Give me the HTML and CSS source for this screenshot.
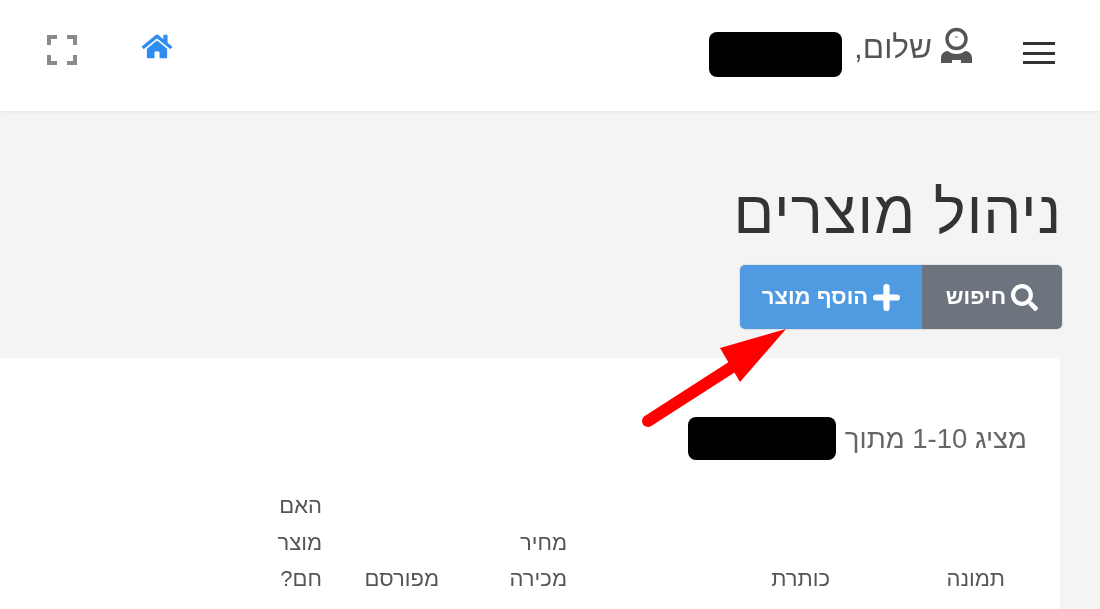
FILE: index.html
```html
<!DOCTYPE html>
<html lang="he" dir="rtl">
<head>
    <meta charset="UTF-8">
    <meta name="viewport" content="width=device-width, initial-scale=1.0">
    <title>ניהול מוצרים</title>
    <link rel="stylesheet" href="styles.css">
</head>
<body>

<header class="topbar">
    <button class="menuToggle" aria-label="תפריט">
        <span></span><span></span><span></span>
    </button>
    <div class="greeting">
        <svg class="userIcon" viewBox="0 0 33 36">
            <circle cx="16.500" cy="12" r="9.500" fill="none" stroke="#555" stroke-width="3.400"/>
            <path d="M15 10h3" stroke="#999" stroke-width="1.500"/>
            <path d="M1 36v-5c0-4 3-7 7-7 2 2 5 3 8.500 3s6.500-1 8.500-3c4 0 7 3 7 7v5h-11v-3h-9v3z" fill="#555"/>
        </svg>
        <span class="greetingText">שלום,</span>
        <span class="redacted redactedName"></span>
    </div>
    <div class="topbarTools">
        <svg class="homeIcon" viewBox="0 0 576 512">
            <path fill="#2f8cf0" d="M280.37 148.26L96 300.11V464a16 16 0 0 0 16 16l112.06-.29a16 16 0 0 0 15.92-16V368a16 16 0 0 1 16-16h64a16 16 0 0 1 16 16v95.64a16 16 0 0 0 16 16.05L464 480a16 16 0 0 0 16-16V300L295.67 148.26a12.19 12.19 0 0 0-15.3 0zM571.6 251.47L488 182.56V44.05a12 12 0 0 0-12-12h-56a12 12 0 0 0-12 12v72.61L318.47 43a48 48 0 0 0-61 0L4.34 251.47a12 12 0 0 0-1.6 16.9l25.5 31A12 12 0 0 0 45.15 301l235.22-193.74a12.19 12.19 0 0 1 15.3 0L530.9 301a12 12 0 0 0 16.9-1.6l25.5-31a12 12 0 0 0-1.7-16.93z"/>
        </svg>
        <svg class="expandIcon" viewBox="0 0 30 30">
            <path fill="none" stroke="#8a8a8a" stroke-width="4" d="M2 10V2h8M20 2h8v8M28 20v8h-8M10 28H2v-8"/>
        </svg>
    </div>
</header>

<main class="content">
    <h1 class="pageTitle">ניהול מוצרים</h1>

    <div class="actions">
        <button class="actionBtn searchBtn">
            <svg viewBox="0 0 512 512">
                <path fill="#fff" d="M505 442.7L405.3 343c-4.5-4.5-10.6-7-17-7H372c27.6-35.3 44-79.7 44-128C416 93.1 322.9 0 208 0S0 93.1 0 208s93.1 208 208 208c48.3 0 92.7-16.4 128-44v16.3c0 6.4 2.5 12.5 7 17l99.7 99.7c9.4 9.4 24.6 9.4 33.9 0l28.3-28.3c9.4-9.4 9.4-24.6.1-34zM208 336c-70.7 0-128-57.2-128-128 0-70.7 57.2-128 128-128 70.7 0 128 57.2 128 128 0 70.7-57.2 128-128 128z"/>
            </svg>
            חיפוש
        </button>
        <button class="actionBtn addBtn">
            <svg viewBox="0 0 26 26">
                <path stroke="#fff" stroke-width="6" stroke-linecap="round" d="M13 3v20M3 13h20"/>
            </svg>
            הוסף מוצר
        </button>
    </div>

    <section class="card">
        <div class="summary">
            <span>מציג 1-10 מתוך</span>
            <span class="redacted redactedTotal"></span>
        </div>
        <div class="tableHead">
            <div>תמונה</div>
            <div>כותרת</div>
            <div>מחיר<br>מכירה</div>
            <div>מפורסם</div>
            <div>האם<br>מוצר<br>חם?</div>
        </div>
    </section>
</main>

<!-- חץ שמצביע על כפתור ההוספה -->
<svg class="arrow" viewBox="0 0 1100 609">
    <path d="M648 421L732 367" stroke="#f00" stroke-width="12" stroke-linecap="round"/>
    <path d="M786 329L720 348L740 382z" fill="#f00"/>
</svg>

</body>
</html>
```

FILE: styles.css
```css
html, body {
    height: 100%;
}
body {
    margin: 0;
    overflow: hidden;
    background-color: #f4f4f4;
    color: #555;
    font-family: 'Liberation Sans', Arial, sans-serif;
    position: relative;
    filter: blur(0.6px); /* the reference is a soft, scaled-up capture */
}
.topbar {
    height: 111px;
    box-sizing: border-box;
    padding: 0 45px 0 47px;
    display: flex;
    align-items: flex-start;
    background-color: #fff;
    box-shadow: 0 1px 3px rgba(0, 0, 0, 0.06);
}
.menuToggle {
    width: 32px;
    height: 22px;
    margin-top: 42px;
    padding: 0;
    border: none;
    background: none;
    display: flex;
    flex-direction: column;
    justify-content: space-between;
}
.menuToggle span {
    display: block;
    height: 3px;
    background-color: #333;
}
.greeting {
    margin-right: 50px;
    display: flex;
    align-items: flex-start;
    font-size: 31.5px;
}
.userIcon {
    width: 33px;
    height: 36px;
    margin-top: 27px;
}
.greetingText {
    margin: 29px 8px 0 12px;
    line-height: 36px;
}
.redacted {
    display: block;
    background-color: #000;
    border-radius: 8px;
}
.redactedName {
    width: 133px;
    height: 45px;
    margin-top: 32px;
}
.topbarTools {
    margin-right: auto;
    display: flex;
    align-items: flex-start;
    gap: 64px;
}
.homeIcon {
    width: 32px;
    height: 27px;
    margin-top: 33px;
}
.expandIcon {
    width: 30px;
    height: 30px;
    margin-top: 35px;
}
.content {
    padding-right: 40px;
}
.pageTitle {
    margin: 62px -2px 0 0;
    font-size: 60px;
    font-weight: 400;
    letter-spacing: 1px;
    line-height: 79px;
    color: #333;
}
.actions {
    display: flex;
    width: 322px;
    height: 64px;
    margin: 13px -2px 29px 0;
    border-radius: 5px;
    overflow: hidden;
    box-shadow: 0 0 2px rgba(0, 0, 0, 0.25);
}
.actionBtn {
    border: none;
    padding: 0;
    display: flex;
    align-items: center;
    justify-content: center;
    gap: 5px;
    color: #fff;
    font-family: inherit;
    font-size: 22px;
    font-weight: 700;
}
.actionBtn svg {
    width: 27px;
    height: 27px;
}
.searchBtn {
    width: 140px;
    background-color: #6c757d;
}
.addBtn {
    flex: 1;
    background-color: #4f9ae0;
}
.card {
    height: 251px;
    box-sizing: border-box;
    padding: 59px 33px 0 0;
    background-color: #fff;
    border-top-right-radius: 5px;
}
.summary {
    display: flex;
    align-items: center;
    gap: 9px;
    font-size: 27.5px;
    height: 43px;
    color: #666;
}
.redactedTotal {
    width: 148px;
    height: 43px;
}
.tableHead {
    margin-top: 28px;
    padding-right: 22px;
    display: grid;
    grid-template-columns: 175px 263px 128px 117px 1fr;
    align-items: end;
    font-size: 22px;
    line-height: 36.5px;
    color: #555;
}
.arrow {
    position: absolute;
    top: 0;
    left: 0;
    width: 1100px;
    height: 609px;
    pointer-events: none;
}
```
